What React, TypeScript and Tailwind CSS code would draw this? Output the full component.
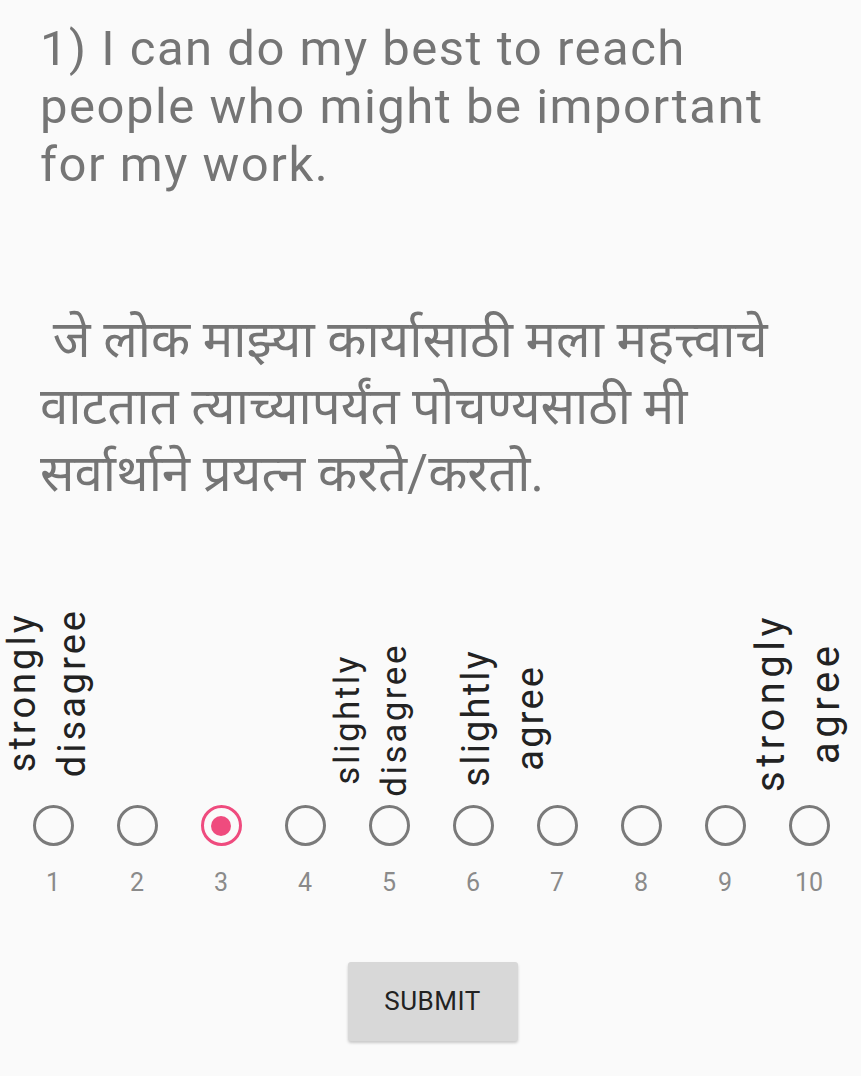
const ratings = [1, 2, 3, 4, 5, 6, 7, 8, 9, 10];

// each end label has its own size, as in the screenshot
const labels: Record<number, { text: string; cls: string }> = {
  1: { text: 'strongly\ndisagree', cls: 'mb-[26px] ml-[-13px] text-[38px] leading-[50px] tracking-[3px]' },
  5: { text: 'slightly\ndisagree', cls: 'mb-[6px] ml-[-36px] text-[35px] leading-[47px] tracking-[2.5px]' },
  6: { text: 'slightly\nagree', cls: 'mb-[16px] ml-[60px] text-[38px] leading-[54px] tracking-[2.2px]' },
  10: { text: 'strongly\nagree', cls: 'mb-[11px] ml-[-22px] text-[40px] leading-[55px] tracking-[4.5px]' },
};

function Radio({ checked }: { checked: boolean }) {
  if (checked) {
    return (
      <div className="w-[41px] h-[41px] rounded-full border-[3px] border-[#ef4b7e] flex items-center justify-center">
        <div className="w-[20px] h-[20px] rounded-full bg-[#ef4b7e]" />
      </div>
    );
  }
  return <div className="w-[41px] h-[41px] rounded-full border-[3px] border-[#7a7a7a]" />;
}

export default function App() {
  const selected = 3;
  return (
    <div className="w-full h-[1076px] bg-[#fafafa] overflow-hidden font-['Roboto','Noto_Sans',sans-serif]">
      {/* question, english */}
      <p className="pl-[40px] pt-[20px] text-[49px] leading-[58px] tracking-[1.5px] text-[#757575] whitespace-nowrap">
        1) I can do my best to reach
        <br />
        people who might be important
        <br />
        for my work.
      </p>

      {/* question, marathi */}
      <p className="pl-[40px] pt-[112px] text-[51px] leading-[67px] text-[#757575] whitespace-pre">
        {' जे लोक माझ्या कार्यासाठी मला महत्त्वाचे'}
        <br />
        वाटतात त्याच्यापर्यंत पोचण्यसाठी मी
        <br />
        सर्वार्थाने प्रयत्न करते/करतो.
      </p>

      {/* scale */}
      <div className="mt-[81px] pl-[11px] flex">
        {ratings.map((n) => (
          <div key={n} className="w-[84px] flex flex-col items-center">
            <div className="h-[215px] w-full flex items-end justify-center">
              {labels[n] && (
                <div
                  className={`[writing-mode:vertical-rl] rotate-180 shrink-0 whitespace-pre-line text-center text-[#222] ${labels[n].cls}`}
                >
                  {labels[n].text}
                </div>
              )}
            </div>
            <div className="mt-[2px]">
              <Radio checked={n === selected} />
            </div>
            <div className="mt-[22px] text-[25px] leading-[30px] text-[#8a8a8a]">{n}</div>
          </div>
        ))}
      </div>

      {/* submit */}
      <div className="mt-[64px] flex justify-center pl-[4px]">
        <button className="w-[170px] h-[79px] rounded-[3px] bg-[#d8d8d8] shadow-[0_2px_3px_rgba(0,0,0,0.2)] text-[26px] text-[#222] tracking-[0.5px]">
          SUBMIT
        </button>
      </div>
    </div>
  );
}
